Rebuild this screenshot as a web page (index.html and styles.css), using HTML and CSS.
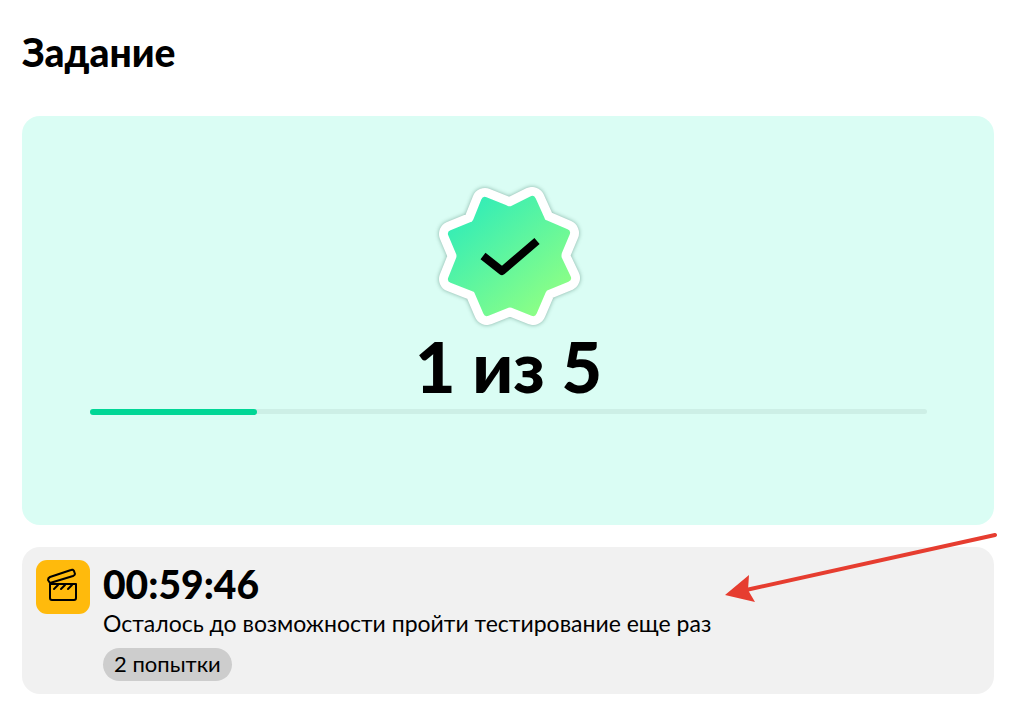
FILE: index.html
```html
<!DOCTYPE html>
<html lang="ru">
<head>
    <meta charset="UTF-8">
    <meta name="viewport" content="width=device-width, initial-scale=1.0">
    <title>Задание</title>
    <link rel="stylesheet" href="styles.css">
</head>
<body>
    <main class="page">
        <h1 class="title">Задание</h1>

        <section class="result">
            <svg class="badge" viewBox="0 0 152 152" aria-hidden="true">
                <defs>
                    <linearGradient id="badge-fill" gradientUnits="userSpaceOnUse" x1="34" y1="28" x2="118" y2="126">
                        <stop offset="0" stop-color="#34edb6"/>
                        <stop offset="1" stop-color="#8dff85"/>
                    </linearGradient>
                    <path id="badge-star" d="M52 21L72 29Q76 31 79 30L99 20L108 40Q109 43 112 44L133 53L125 72Q124 76 125 79L134 98L112 107Q110 109 109 111L100 132L80 124Q77 123 74 124L54 132L45 111Q44 109 42 108L19 99L27 79Q28 76 27 73L19 54L41 45Q43 43 44 41Z"/>
                </defs>
                <use href="#badge-star" class="badge-border"/>
                <use href="#badge-star" class="badge-body"/>
                <path class="badge-check" d="M50 76L69 91L104 61"/>
            </svg>
            <p class="score" id="score">1 из 5</p>
            <div class="progress-bar" role="progressbar" aria-labelledby="score" aria-valuemin="0" aria-valuemax="5" aria-valuenow="1">
                <div class="progress" style="width: 20%"></div>
            </div>
        </section>

        <section class="timer-card">
            <div class="timer-icon">
                <svg viewBox="0 0 54 54" aria-hidden="true">
                    <path d="M14 24H40V38Q40 40 38 40H16Q14 40 14 38Z"/>
                    <path d="M14 23L12 20Q12 18 14 17L35 10Q37 9 38 11L39 14Q39 15 37 16Z"/>
                    <path d="M18 29L22 25M25 29L29 25M32 29L36 25"/>
                </svg>
            </div>
            <div class="timer-info">
                <h2 class="timer">00:59:46</h2>
                <p class="timer-text">Осталось до возможности пройти тестирование еще раз</p>
                <span class="attempts">2 попытки</span>
            </div>
            <svg class="arrow" viewBox="0 0 274 72" aria-hidden="true">
                <path class="arrow-line" d="M22 58L271 3"/>
                <path class="arrow-head" d="M1 63L25 43L24 58L31 70Z"/>
            </svg>
        </section>
    </main>
</body>
</html>
```
FILE: styles.css
```css
* {
    box-sizing: border-box;
}

body {
    margin: 0;
    background: #fff;
    color: #000;
    font-family: Lato, "Open Sans", sans-serif;
}

.page {
    padding: 28px 31px 30px 22px;
}

.title {
    margin: 0 0 40px;
    font-size: 39px;
    line-height: 48px;
    font-weight: 900;
}

.result {
    display: flex;
    flex-direction: column;
    align-items: center;
    padding: 64px 67px 111px 68px;
    background: #dafdf4;
    border-radius: 18px;
}

.badge {
    width: 152px;
    height: 152px;
    filter: drop-shadow(0 0 2px rgba(0, 60, 40, 0.4));
}

.badge-border {
    fill: #fff;
    stroke: #fff;
    stroke-width: 26;
    stroke-linejoin: round;
}

.badge-body {
    fill: url(#badge-fill);
    stroke: url(#badge-fill);
    stroke-width: 8;
    stroke-linejoin: round;
}

.badge-check {
    fill: none;
    stroke: #000;
    stroke-width: 8;
    stroke-linejoin: round;
}

.score {
    margin: 0 0 9px;
    font-size: 70px;
    line-height: 68px;
    font-weight: 900;
}

.progress-bar {
    width: 100%;
    height: 5px;
    background: #cdefe6;
    border-radius: 3px;
}

.progress {
    height: 6px;
    background: #00d695;
    border-radius: 3px;
}

.timer-card {
    position: relative;
    display: flex;
    gap: 13px;
    margin-top: 22px;
    padding: 13px 14px;
    background: #f1f1f1;
    border-radius: 18px;
}

.timer-icon {
    flex: none;
    width: 54px;
    height: 54px;
    background: #ffba0c;
    border-radius: 11px;
}

.timer-icon path {
    fill: none;
    stroke: #000;
    stroke-width: 2;
    stroke-linejoin: round;
    stroke-linecap: round;
}

.timer-info {
    min-width: 0;
}

.timer {
    margin: 0;
    font-size: 39px;
    line-height: 48px;
    font-weight: 900;
}

.timer-text {
    margin: 0 0 10px;
    font-size: 23px;
    line-height: 30px;
}

.attempts {
    display: block;
    width: fit-content;
    padding: 0 11px 2px;
    background: #cdcdcd;
    border-radius: 17px;
    font-size: 22px;
    line-height: 31px;
}

/* Указатель на таймер */
.arrow {
    position: absolute;
    top: -15px;
    right: -4px;
    width: 274px;
    height: 72px;
}

.arrow-line {
    stroke: #e63d30;
    stroke-width: 4;
    stroke-linecap: round;
}

.arrow-head {
    fill: #e63d30;
}
```
